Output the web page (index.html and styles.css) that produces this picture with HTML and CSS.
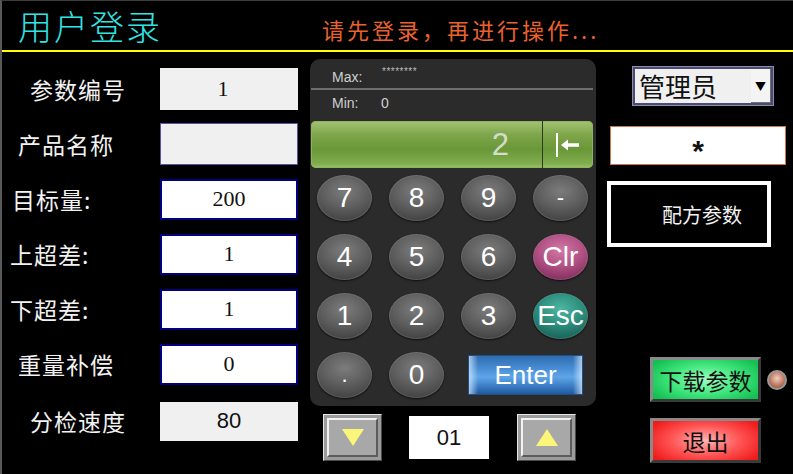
FILE: index.html
```html
<!DOCTYPE html>
<html lang="zh-CN">
<head>
    <meta charset="UTF-8">
    <meta name="viewport" content="width=device-width, initial-scale=1.0">
    <title>用户登录</title>
    <link rel="stylesheet" href="styles.css">
</head>
<body>
    <div class="screen">
        <header class="topbar">
            <h1 class="title">用户登录</h1>
            <p class="notice">请先登录，再进行操作...</p>
        </header>

        <main class="panel-grid">
            <!-- parameter list -->
            <section class="params">
                <div class="row"><span class="label pad-wide">参数编号</span><div class="field field-ro field-shift">1</div></div>
                <div class="row"><span class="label pad-mid">产品名称</span><div class="field field-name"></div></div>
                <div class="row"><span class="label pad-small">目标量:</span><div class="field field-edit">200</div></div>
                <div class="row"><span class="label pad-tiny">上超差:</span><div class="field field-edit">1</div></div>
                <div class="row"><span class="label pad-tiny">下超差:</span><div class="field field-edit">1</div></div>
                <div class="row"><span class="label pad-mid">重量补偿</span><div class="field field-edit">0</div></div>
                <div class="row row-last"><span class="label pad-wide">分检速度</span><div class="field field-ro field-sans">80</div></div>
            </section>

            <!-- numeric keypad -->
            <section class="middle">
                <div class="keypad">
                    <div class="range range-max"><span class="range-name">Max:</span><span class="stars">********</span></div>
                    <div class="range range-min"><span class="range-name">Min:</span><span>0</span></div>
                    <div class="display">
                        <span class="display-value">2</span>
                        <span class="display-back">
                            <svg width="40" height="30" viewBox="0 0 40 30">
                                <rect x="10" y="3" width="2" height="24" fill="#fff"/>
                                <path d="M15 15 L22 9.5 L22 13.2 L33 13.2 L33 16.8 L22 16.8 L22 20.5 Z" fill="#fff"/>
                            </svg>
                        </span>
                    </div>
                    <div class="keys">
                        <div class="key">7</div>
                        <div class="key">8</div>
                        <div class="key">9</div>
                        <div class="key key-small">-</div>
                        <div class="key">4</div>
                        <div class="key">5</div>
                        <div class="key">6</div>
                        <div class="key key-clr">Clr</div>
                        <div class="key">1</div>
                        <div class="key">2</div>
                        <div class="key">3</div>
                        <div class="key key-esc">Esc</div>
                        <div class="key key-small">.</div>
                        <div class="key">0</div>
                        <div class="key-enter">Enter</div>
                    </div>
                </div>

                <div class="stepper">
                    <div class="step-btn"><span class="step-face"><span class="tri tri-down"></span></span></div>
                    <div class="step-value">01</div>
                    <div class="step-btn"><span class="step-face"><span class="tri tri-up"></span></span></div>
                </div>
            </section>

            <!-- login side -->
            <section class="side">
                <div class="select">
                    <span class="select-text">管理员</span>
                    <span class="select-arrow">&#9660;</span>
                </div>
                <div class="password">*</div>
                <div class="recipe">配方参数</div>
                <div class="action-row">
                    <div class="btn btn-green">下载参数</div>
                    <span class="lamp"></span>
                </div>
                <div class="btn btn-red btn-exit">退出</div>
            </section>
        </main>
    </div>
</body>
</html>
```

FILE: styles.css
```css
body {
    margin: 0;
    background: #000;
    font-family: "Noto Sans CJK SC", sans-serif;
}

.screen {
    width: 793px;
    height: 474px;
    box-sizing: border-box;
    border-left: 2px solid #595959;
    border-top: 1px solid #3c3c3c;
    background: #000;
    overflow: hidden;
}

/* header */
.topbar {
    height: 49px;
    border-bottom: 2px solid #ffff00;
    display: flex;
    align-items: center;
    padding-left: 16px;
}

.title {
    margin: 0;
    width: 304px;
    flex: none;
    font-size: 34px;
    font-weight: 300;
    line-height: 1;
    letter-spacing: 2px;
    color: #33e4e4;
}

.notice {
    margin: 6px 0 0;
    font-size: 22px;
    line-height: 1;
    letter-spacing: 3px;
    color: #ea632e;
}

.panel-grid {
    display: grid;
    grid-template-columns: 308px 286px 1fr;
}

/* left parameters */
.params {
    padding-top: 16px;
    display: flex;
    flex-direction: column;
    gap: 13px;
}

.row {
    display: flex;
    align-items: center;
    height: 42px;
}

.row-last {
    margin-top: 2px;
}

.label {
    width: 158px;
    box-sizing: border-box;
    flex: none;
    color: #f2f2f2;
    font-size: 23px;
    letter-spacing: 1px;
    line-height: 1;
}

.pad-wide { padding-left: 28px; }
.pad-mid { padding-left: 16px; }
.pad-small { padding-left: 10px; }
.pad-tiny { padding-left: 8px; }

.field {
    width: 138px;
    height: 42px;
    box-sizing: border-box;
    display: flex;
    align-items: center;
    justify-content: center;
    font-family: "Liberation Serif", serif;
    font-size: 22px;
    color: #111;
}

.field-ro {
    background: #f0f0f0;
}

.field-shift {
    padding-right: 12px;
}

.field-sans {
    font-family: "Liberation Sans", sans-serif;
    height: 39px;
}

.field-name {
    background: #f0f0f0;
    border: 1px solid #5a55a0;
}

.field-edit {
    background: #fff;
    border: 2px solid #000080;
    height: 41px;
}

/* keypad */
.keypad {
    margin-top: 7px;
    background: #2b2b2b;
    border-radius: 10px;
    padding: 0 3px 8px 1px;
    font-family: "Liberation Sans", sans-serif;
}

.range {
    display: flex;
    align-items: center;
    padding-left: 21px;
    color: #cfcfcf;
    font-size: 14px;
}

.range-max {
    height: 31px;
    align-items: flex-start;
    padding-top: 10px;
    box-sizing: border-box;
    border-bottom: 2px solid #6e6e6e;
}

.range-min {
    height: 26px;
}

.range-name {
    width: 50px;
}

.range-min .range-name {
    width: 49px;
}

.stars {
    font-size: 10px;
    margin-top: -3px;
    color: #bbb;
    letter-spacing: 0.5px;
}

.display {
    margin-top: 5px;
    height: 47px;
    border-radius: 5px;
    display: flex;
    background: linear-gradient(#a3c474 0%, #7ea54a 30%, #6a9838 60%, #7fad4e 90%, #9cc26c 100%);
    box-shadow: inset 0 0 0 1px #8cb45a;
}

.display-value {
    width: 232px;
    box-sizing: border-box;
    border-right: 1px solid #2d3a1c;
    text-align: right;
    padding-right: 33px;
    font-size: 31px;
    line-height: 47px;
    color: #d4dccb;
}

.display-back {
    flex: 1;
    display: flex;
    align-items: center;
    padding-left: 3px;
}

.keys {
    margin-top: 7px;
    padding-left: 6px;
    display: grid;
    grid-template-columns: repeat(4, 55px);
    grid-auto-rows: 46px;
    column-gap: 17px;
    row-gap: 13px;
}

.key {
    border-radius: 50%;
    display: flex;
    align-items: center;
    justify-content: center;
    color: #fff;
    font-size: 28px;
    background: radial-gradient(ellipse 75% 65% at 50% 35%, #7c7c7c 0%, #5e5e5e 55%, #434343 100%);
    box-shadow: 0 1px 2px rgba(0, 0, 0, 0.7), inset 0 0 0 1px rgba(150, 150, 150, 0.25);
}

.key-small {
    font-size: 22px;
}

.key-clr {
    background: radial-gradient(ellipse 75% 65% at 50% 35%, #d27aa6 0%, #b04f83 55%, #84305e 100%);
}

.key-esc {
    background: radial-gradient(ellipse 75% 65% at 50% 35%, #4fb6a4 0%, #2c8c7c 55%, #1a6458 100%);
}

.key-enter {
    grid-column: 3 / 5;
    margin: 3px 5px 3px 7px;
    display: flex;
    align-items: center;
    justify-content: center;
    color: #fff;
    font-size: 26px;
    border: 1px solid #1e4f86;
    background:
        linear-gradient(90deg, rgba(220, 240, 255, 0.7) 0%, rgba(255, 255, 255, 0) 8%, rgba(255, 255, 255, 0) 92%, rgba(220, 240, 255, 0.7) 100%),
        linear-gradient(#2f6cb0 0%, #4a8fd6 35%, #5ea6e8 55%, #3b7cc4 80%, #1f5a9e 100%);
}

/* stepper under keypad */
.stepper {
    margin-top: 8px;
    padding-left: 13px;
    display: flex;
    align-items: center;
}

.step-btn {
    width: 59px;
    height: 47px;
    box-sizing: border-box;
    padding: 3px;
    background: #9c9c9c;
    border: 1px solid;
    border-color: #e8e8e8 #4a4a4a #4a4a4a #e8e8e8;
    display: flex;
}

.step-face {
    flex: 1;
    display: flex;
    align-items: center;
    justify-content: center;
    background: #a8a8a8;
    border: 2px solid;
    border-color: #f2f2f2 #5c5c5c #5c5c5c #f2f2f2;
}

.tri {
    width: 0;
    height: 0;
    border-left: 11px solid transparent;
    border-right: 11px solid transparent;
}

.tri-down {
    border-top: 17px solid #fbf57a;
}

.tri-up {
    border-bottom: 17px solid #fbf57a;
}

.step-value {
    width: 80px;
    height: 43px;
    margin: 0 28px 0 27px;
    background: #fff;
    display: flex;
    align-items: center;
    justify-content: center;
    font-family: "Liberation Sans", sans-serif;
    font-size: 22px;
    color: #111;
}

/* right side */
.side {
    padding-top: 15px;
    display: flex;
    flex-direction: column;
    align-items: flex-start;
}

.select {
    margin-left: 37px;
    width: 140px;
    height: 38px;
    box-sizing: border-box;
    border: 2px solid #4b4b6e;
    box-shadow: 0 0 0 1px #8c8cb0;
    background: #f0f0f0;
    display: flex;
}

.select-text {
    flex: 1;
    padding-left: 4px;
    font-size: 26px;
    line-height: 34px;
    color: #111;
}

.select-arrow {
    width: 19px;
    display: flex;
    align-items: center;
    justify-content: center;
    font-size: 11px;
    color: #000;
    background: #f4f4f4;
    border-right: 1px solid #707070;
    border-bottom: 1px solid #707070;
}

.password {
    margin: 21px 0 0 14px;
    width: 176px;
    height: 39px;
    box-sizing: border-box;
    background: #fff;
    border: 1px solid #c8784a;
    text-align: center;
    font-family: "Liberation Sans", sans-serif;
    font-weight: bold;
    font-size: 30px;
    line-height: 47px;
    color: #111;
}

.recipe {
    margin: 16px 0 0 11px;
    width: 164px;
    height: 66px;
    box-sizing: border-box;
    border: 4px solid #fff;
    background: #000;
    display: flex;
    align-items: center;
    justify-content: center;
    padding-left: 26px;
    color: #f2f2f2;
    font-size: 20px;
}

.action-row {
    margin: 110px 0 0 54px;
    display: flex;
    align-items: center;
}

.btn {
    width: 111px;
    height: 45px;
    box-sizing: border-box;
    border: 3px solid;
    border-color: #8a8a8a #3a3a3a #3a3a3a #8a8a8a;
    display: flex;
    align-items: center;
    justify-content: center;
    font-size: 23px;
    color: #111;
}

.btn-green {
    background: radial-gradient(ellipse 60% 70% at 50% 50%, #9dffc0 0%, #3fe57c 55%, #14c052 100%);
}

.btn-red {
    background: radial-gradient(ellipse 60% 70% at 50% 50%, #ffb4b4 0%, #ff5454 55%, #f01c1c 100%);
}

.btn-exit {
    margin: 16px 0 0 54px;
}

.lamp {
    margin-left: 6px;
    width: 20px;
    height: 20px;
    box-sizing: border-box;
    border-radius: 50%;
    border: 2px solid #9a9a9a;
    background: radial-gradient(circle at 50% 40%, #f2cfc0 0%, #c07a62 55%, #7e3c2a 100%);
}
```
